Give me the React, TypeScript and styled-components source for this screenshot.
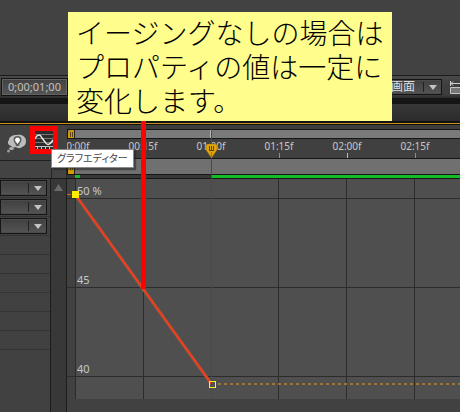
import React from "react";
import styled, { createGlobalStyle } from "styled-components";

const GlobalStyle = createGlobalStyle`
  * { box-sizing: border-box; }
  html, body { margin: 0; background: #414141; }
  body, button, select {
    font-family: "Noto Sans", "Noto Sans CJK JP", sans-serif;
    font-size: 11px;
    color: #c8c8c8;
  }
`;

const Page = styled.main`
  position: relative;
  display: flex;
  flex-direction: column;
  min-height: 100vh;
  overflow: hidden;
  background: #414141;
`;

const Viewer = styled.section`
  height: 75px;
  background: #424242;
`;

const ViewerBar = styled.div`
  display: flex;
  align-items: center;
  gap: 8px;
  height: 23px;
  border-top: 1px solid #1c1c1c;
  background: linear-gradient(#4a4a4a, #404040 30%, #3c3c3c 85%, #2b2b2b);
`;

const TimeButton = styled.button`
  width: 67px;
  height: 18px;
  margin-left: 1px;
  margin-right: auto;
  padding: 0 0 2px;
  border: 1px solid #141414;
  box-shadow: inset 0 0 0 1px #626262;
  background: linear-gradient(#424242, #545454);
  line-height: 13px;
  color: #c6c0b8;
`;

const SelectBox = styled.span<{ $width?: string }>`
  position: relative;
  display: flex;
  width: ${(p) => p.$width ?? "100%"};
  height: 16px;
`;

const Select = styled.select`
  appearance: none;
  width: 100%;
  height: 100%;
  padding: 0 20px 0 2px;
  border: 1px solid #151515;
  border-radius: 0;
  box-shadow: inset 0 0 0 1px #4b4b4b;
  background: linear-gradient(#404040, #545454);
  font-size: 12px;
  line-height: 14px;
  color: #dedede;
`;

const SelectArrow = styled.svg`
  position: absolute;
  top: 0;
  right: 0;
  width: 20px;
  height: 16px;
  pointer-events: none;
`;

const IconButton = styled.button`
  display: block;
  flex: none;
  padding: 0;
  border: 0;
  background: none;
  line-height: 0;
`;

const Gutter = styled.div`
  height: 6px;
  background: #151515;
`;

const TabStrip = styled.div`
  height: 19px;
  border-bottom: 2px solid #121212;
  background: linear-gradient(#383838, #2b2b2b);
`;

const Timeline = styled.section`
  flex: 1;
  display: grid;
  grid-template-columns: 67px minmax(0, 1fr);
  grid-template-rows: 54px 1fr;
  padding-top: 1px;
  border-top: 1px solid #c68e1a;
  background: #12100a;
`;

const Tools = styled.div`
  display: flex;
  flex-direction: column;
  border-bottom: 1px solid #1a1a1a;
  background: #424242;
`;

const ToolRow = styled.div`
  display: flex;
  gap: 3px;
  height: 35px;
  padding: 1px 0 0 6px;
`;

const HeadingRow = styled.div`
  display: grid;
  grid-template-columns: 52px 1fr;
  flex: 1;
  border-top: 1px solid #202020;
  background: #434343;
`;

const HeadingCell = styled.div`
  border-right: 1px solid #262626;
`;

const GraphButton = styled(IconButton)`
  width: 28px;
  height: 28px;
  border: 5px solid #ff0000;
  background: #2c2c2c;
`;

const TimeHead = styled.div`
  position: relative;
  display: flex;
  flex-direction: column;
  padding-top: 4px;
  background: #3d3d3d;
`;

const RangeBar = styled.div<{ $height: string; $tone: string }>`
  display: flex;
  height: ${(p) => p.$height};
  border: solid #161616;
  border-width: 1px 0 1px 1px;
  background: ${(p) => p.$tone};
`;

const Handle = styled.svg`
  width: 7px;
  height: 100%;
  background: #d39b08;
  border-right: 1px solid #2a2208;
  border-radius: 4px 0 0 0;
`;

const Ruler = styled.div`
  display: flex;
  height: 19px;
  overflow: hidden;
  background: #404040;
`;

const Mark = styled.div`
  flex: none;
  display: flex;
  flex-direction: column;
  align-items: center;
  justify-content: space-between;
  width: 68px;
  font-size: 10px;
  line-height: 14px;
  &:first-child { margin-left: -26px; }
`;

const Tick = styled.i<{ $major: boolean }>`
  width: 1px;
  height: 5px;
  background: ${(p) => (p.$major ? "#bdbdbd" : "#8f8f8f")};
`;

const Cache = styled.div`
  display: grid;
  grid-template-columns: 8px 5px 131px 1fr;
  height: 4px;
  border-bottom: 1px solid #161616;
  background: #383838;
`;

const Cached = styled.div`
  background: #12bd27;
`;

const Playhead = styled.svg`
  position: absolute;
  left: 138px;
  top: 4px;
`;

const Side = styled.div`
  display: grid;
  grid-template-columns: 50px 17px;
`;

const Rows = styled.div`
  background: #414141;
`;

const Row = styled.div`
  height: 19px;
  padding: 1px 3px 1px 0;
  border-bottom: 1px solid #343434;
`;

const Scroll = styled.div`
  display: flex;
  justify-content: center;
  padding-top: 5px;
  border: solid #1d1d1d;
  border-width: 0 1px;
  background: #383838;
`;

const PlotArea = styled.div`
  background: #414141;
`;

const Plot = styled.svg`
  display: block;
  width: 100%;
  height: 220px;
  font-size: 11px;
`;

const Tip = styled.div`
  position: absolute;
  left: 51px;
  top: 149px;
  height: 19px;
  padding: 0 5px;
  border: 1px solid #8a8a8a;
  box-shadow: 2px 2px 1px #2228;
  background: #fff;
  font: 10px/16px "Noto Sans CJK JP", sans-serif;
  font-feature-settings: "palt";
  white-space: nowrap;
  color: #444;
`;

const Callout = styled.p`
  position: absolute;
  left: 68px;
  top: 12px;
  width: 324px;
  height: 109px;
  margin: 0;
  padding: 3px 8px;
  background: #fffd8c;
  font: 300 28px/34px "Noto Sans CJK JP", sans-serif;
  white-space: nowrap;
  color: #000;
  &::after {
    content: "";
    position: absolute;
    left: 73px;
    top: 109px;
    width: 5px;
    height: 168px;
    background: #ff0000;
  }
`;

const times = ["00:00f", "00:15f", "01:00f", "01:15f", "02:00f", "02:15f"];
const levels = [
  { y: 19, label: "50 %" },
  { y: 108, label: "45" },
  { y: 197, label: "40" },
];
const columns = [8, 76, 144, 211, 279, 347, 415, 483];

function Dropdown({ label, value, width }: { label: string; value: string; width?: string }) {
  return (
    <SelectBox $width={width}>
      <Select aria-label={label} defaultValue={value}>
        <option value={value}>{value}</option>
      </Select>
      <SelectArrow viewBox="0 0 20 16">
        <path d="M1.5 3v10" stroke="#202020" />
        <path d="M7 6h8l-4 5z" fill="#c4c4c4" />
      </SelectArrow>
    </SelectBox>
  );
}

function RangeHandle() {
  return (
    <Handle viewBox="0 0 6 8">
      <path d="M2.5 2v5M4.5 2v5" stroke="#584310" />
    </Handle>
  );
}

export default function App() {
  return (
    <Page>
      <GlobalStyle />
      <Viewer />
      <ViewerBar>
        <TimeButton type="button">0;00;01;00</TimeButton>
        <Dropdown label="解像度" value="画面" width="54px" />
        <IconButton type="button" aria-label="関心領域">
          <svg width="10" height="16" viewBox="0 0 10 16" fill="none">
            <path d="M0 4.5h10M.5 2v5M3 2.5 1 4.5l2 2" stroke="#d0d0d0" />
            <path d="M.5 8.5h14v6H.5z" fill="#777" stroke="#c4c4c4" />
          </svg>
        </IconButton>
      </ViewerBar>
      <Gutter />
      <TabStrip />
      <Timeline>
        <Tools>
          <ToolRow>
            <IconButton type="button" aria-label="ブレインストーム">
              <svg width="21" height="28" viewBox="0 0 21 28">
                <path
                  d="M11 6c5-1 9 2 9 6 0 3-1 5-4 6-2 2-5 1-6 0-2 1-4 0-5-1-3-1-4-4-2-6 0-3 3-5 8-5z"
                  fill="#bdbdbd"
                />
                <ellipse cx="5.5" cy="19.5" rx="2.5" ry="1.5" fill="#b0b0b0" />
                <circle cx="2.5" cy="22" r="1.5" fill="#999" />
                <path d="M11.5 7a4 4 0 0 0-4 4c0 2 2 3 2.5 6h3c.5-3 2.5-4 2.5-6a4 4 0 0 0-4-4z" fill="#5c5c5c" />
                <path d="M11.5 8.5a2.500 2.500 0 0 0-1.5 4.500l1.500 2 1.500-2a2.500 2.500 0 0 0-1.5-4.500z" fill="#fff" />
              </svg>
            </IconButton>
            <GraphButton type="button" aria-label="グラフエディター">
              <svg width="18" height="18" viewBox="0 0 18 18" fill="none">
                <path d="M0 3.5h18M0 7.5h18M0 11.5h18" stroke="#777" />
                <path d="M0 15.5h18M2.5 16v2M6.5 16v2M10.5 16v2M14.5 16v2" stroke="#c4c4c4" />
                <path d="M0 8c2-5 5-5 7-1l3 4c2 4 5 3 8-2" stroke="#e6e6e6" strokeWidth="1.5" />
              </svg>
            </GraphButton>
          </ToolRow>
          <HeadingRow>
            <HeadingCell />
            <HeadingCell />
          </HeadingRow>
        </Tools>
        <TimeHead>
          <RangeBar $height="10px" $tone="#7a7a7a">
            <RangeHandle />
          </RangeBar>
          <Ruler>
            {times.map((time, i) => (
              <Mark key={time}>
                {time}
                <Tick $major={i % 2 === 0} />
              </Mark>
            ))}
          </Ruler>
          <RangeBar $height="17px" $tone="#707070">
            <RangeHandle />
          </RangeBar>
          <Cache>
            <span />
            <Cached />
            <span />
            <Cached />
          </Cache>
          <Playhead width="13" height="50" viewBox="0 0 13 50">
            <path d="M5.5 1v8" stroke="#b8b8b8" />
            <path d="M6.5 0v50" stroke="#c81414" />
            <path d="M1 17q0-2 2-2h7q2 0 2 2v4l-5.5 8L1 21z" fill="#dfa60c" stroke="#8c6a10" strokeWidth="0.5" />
            <path d="M4.5 17v4M6.5 17v4M8.5 17v4M4 21.5h5" stroke="#5d4612" />
            <path d="M6.5 23v6" stroke="#777" />
          </Playhead>
        </TimeHead>
        <Side>
          <Rows>
            {["X", "Y", "Z"].map((axis) => (
              <Row key={axis}>
                <Dropdown label={`親 ${axis}`} value="" />
              </Row>
            ))}
            {[1, 2, 3, 4, 5, 6].map((n) => (
              <Row key={n} />
            ))}
          </Rows>
          <Scroll>
            <svg width="11" height="8" viewBox="0 0 11 8">
              <path d="M5.5 0 10 7H1z" fill="#6a6a6a" />
            </svg>
          </Scroll>
        </Side>
        <PlotArea>
          <Plot role="img" aria-label="値グラフ">
            <rect x="8" width="100%" height="220" fill="#4f4f4f" />
            {levels.map(({ y, label }) => (
              <g key={label}>
                <rect y={y} width="100%" height="1" fill="#2c2c2c" />
                <text x="10" y={y - 3} fill="#c8c8c8">{label}</text>
              </g>
            ))}
            {columns.map((x) => (
              <rect key={x} x={x} width="1" height="220" fill="#2c2c2c" />
            ))}
            <path d="M0 15.5h4" stroke="#d0651f" />
            <path d="M8.5 16 144.5 205" stroke="#8a6034" strokeWidth="3" />
            <path d="M8.5 16 144.5 205" stroke="#f83824" strokeWidth="2" />
            <line x1="151" y1="205" x2="100%" y2="205" stroke="#9a7638" strokeWidth="2" strokeDasharray="3 3" />
            <rect x="144" width="1" height="220" fill="#c81414" />
            <rect x="5" y="12" width="7" height="7" fill="#ffee00" />
            <rect x="142.5" y="202.5" width="6" height="6" fill="none" stroke="#fff020" />
          </Plot>
        </PlotArea>
      </Timeline>
      <Callout>
        イージングなしの場合は
        <br />
        プロパティの値は一定に
        <br />
        変化します。
      </Callout>
      <Tip role="tooltip">グラフエディター</Tip>
    </Page>
  );
}
